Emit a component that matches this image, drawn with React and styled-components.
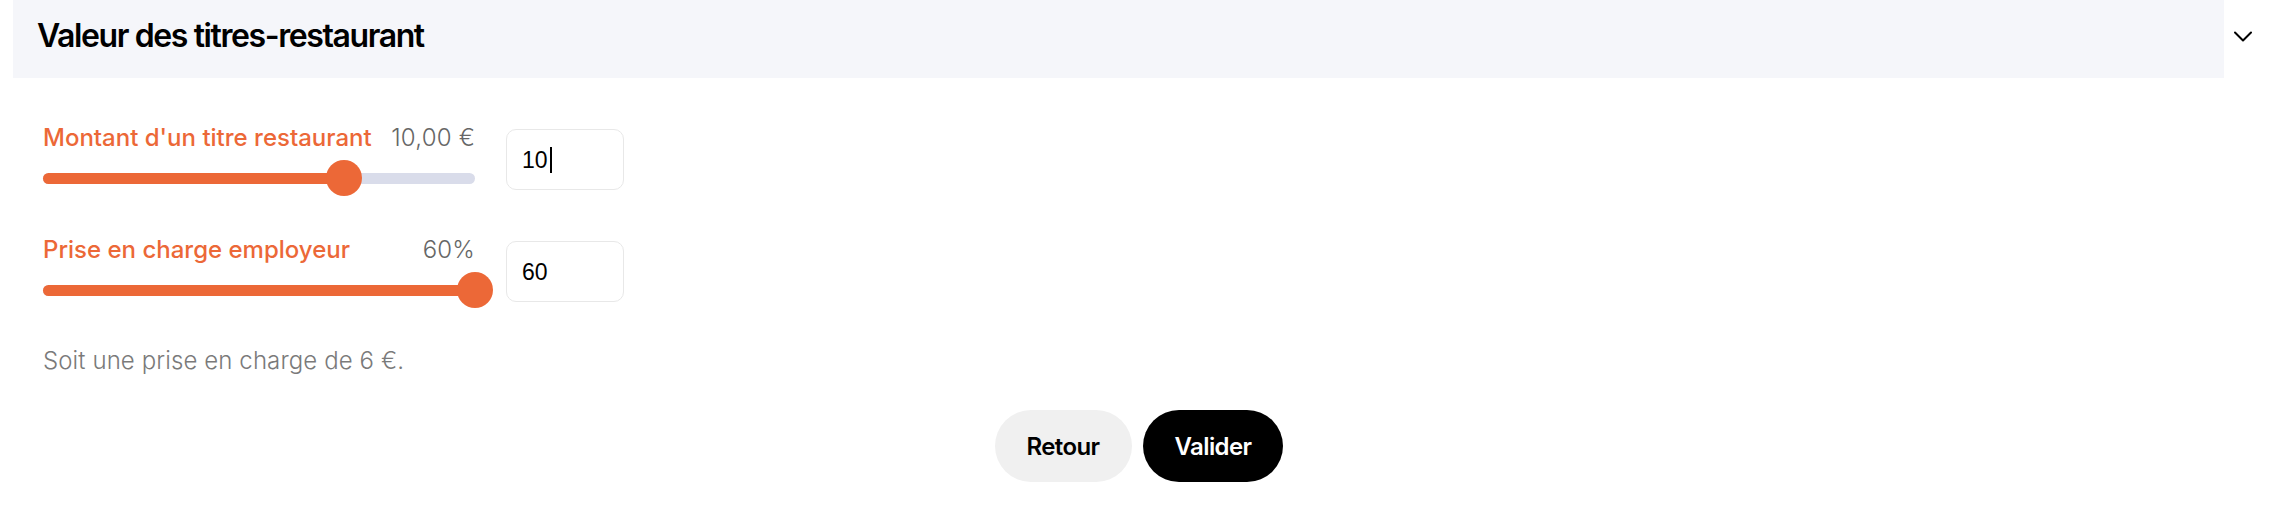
import React from "react";
import styled, { createGlobalStyle } from "styled-components";

const GlobalStyle = createGlobalStyle`
  html, body { margin: 0; padding: 0; background: #ffffff; }
  body { font-family: Inter, "Noto Sans", sans-serif; color: #000; }
  * { box-sizing: border-box; }
`;

const ORANGE = "#EC6837";

const Page = styled.div`
  width: 2284px;
  height: 506px;
  display: flex;
  flex-direction: column;
`;

const Header = styled.div`
  display: flex;
  align-items: stretch;
  height: 78px;
  padding-left: 13px;
`;

const TitleBar = styled.div`
  flex: 1;
  background: #F5F6FA;
  padding: 16px 0 0 24px;
`;

const Title = styled.h2`
  margin: 0;
  font-family: Inter, sans-serif;
  font-size: 32px;
  line-height: 40px;
  font-weight: 600;
  letter-spacing: -1.4px;
  color: #000;
`;

const ChevronCell = styled.div`
  width: 60px;
  display: flex;
  align-items: flex-start;
  padding: 31px 0 0 10px;
`;

const Body = styled.div`
  display: flex;
  flex-direction: column;
  gap: 38px;
  padding: 44px 0 0 43px;
`;

const Row = styled.div`
  display: flex;
  align-items: center;
  gap: 31px;
`;

const SliderColumn = styled.div`
  width: 432px;
  display: flex;
  flex-direction: column;
  gap: 6px;
`;

const LabelLine = styled.div`
  display: flex;
  justify-content: space-between;
  align-items: baseline;
  height: 32px;
`;

const Label = styled.span`
  font-size: 24px;
  line-height: 32px;
  font-weight: 500;
  color: ${ORANGE};
  letter-spacing: 0;
`;

const Value = styled.span`
  font-size: 24px;
  line-height: 32px;
  font-weight: 300;
  color: #666666;
  letter-spacing: 0.2px;
`;

const SliderArea = styled.div`
  position: relative;
  height: 36px;
  display: flex;
  align-items: center;
`;

const Track = styled.div`
  position: relative;
  width: 100%;
  height: 11px;
  border-radius: 6px;
  background: #D9DCEA;
`;

const Fill = styled.div`
  height: 100%;
  border-radius: 6px 0 0 6px;
  background: ${ORANGE};
`;

const Thumb = styled.div`
  position: absolute;
  top: 50%;
  width: 36px;
  height: 36px;
  border-radius: 50%;
  background: ${ORANGE};
  transform: translate(-50%, -50%);
`;

const Field = styled.div`
  width: 118px;
  height: 61px;
  border: 1px solid #E8E8E8;
  border-radius: 10px;
  display: flex;
  align-items: center;
  padding: 2px 0 0 15px;
  font-family: "Liberation Sans", Arial, sans-serif;
  font-size: 23px;
  color: #000;
`;

const Caret = styled.span`
  display: inline-block;
  width: 2px;
  height: 26px;
  margin-left: 2px;
  background: #000;
`;

const Note = styled.p`
  margin: 37px 0 0 43px;
  font-size: 24px;
  line-height: 32px;
  font-weight: 300;
  color: #7A7A7A;
  letter-spacing: 0.1px;
`;

const Actions = styled.div`
  display: flex;
  justify-content: center;
  gap: 11px;
  margin-top: 33px;
  padding-right: 6px;
`;

const Button = styled.button`
  height: 72px;
  padding: 0 32px;
  border: none;
  border-radius: 36px;
  background: ${(p) => (p.$primary ? "#000000" : "#F0F0F0")};
  color: ${(p) => (p.$primary ? "#ffffff" : "#000000")};
  font-family: Inter, sans-serif;
  font-size: 24px;
  font-weight: 600;
  letter-spacing: -0.6px;
  cursor: pointer;
`;

function Slider({ fraction }) {
  const pct = `${fraction * 100}%`;
  return (
    <SliderArea>
      <Track>
        <Fill style={{ width: pct }} />
        <Thumb style={{ left: pct }} />
      </Track>
    </SliderArea>
  );
}

function SliderRow({ label, display, fraction, value, caret }) {
  return (
    <Row>
      <SliderColumn>
        <LabelLine>
          <Label>{label}</Label>
          <Value>{display}</Value>
        </LabelLine>
        <Slider fraction={fraction} />
      </SliderColumn>
      <Field>
        <span>{value}</span>
        {caret && <Caret />}
      </Field>
    </Row>
  );
}

export default function App() {
  return (
    <>
      <GlobalStyle />
      <Page>
        <Header>
          <TitleBar>
            <Title>Valeur des titres-restaurant</Title>
          </TitleBar>
          <ChevronCell>
            <svg width="18" height="12" viewBox="0 0 18 12" fill="none">
              <polyline
                points="1,1.5 9,9.5 17,1.5"
                stroke="#000"
                strokeWidth="2"
                strokeLinecap="round"
                strokeLinejoin="round"
              />
            </svg>
          </ChevronCell>
        </Header>
        <Body>
          <SliderRow
            label="Montant d'un titre restaurant"
            display="10,00 €"
            fraction={0.697}
            value="10"
            caret
          />
          <SliderRow
            label="Prise en charge employeur"
            display="60%"
            fraction={1}
            value="60"
          />
        </Body>
        <Note>Soit une prise en charge de 6 €.</Note>
        <Actions>
          <Button>Retour</Button>
          <Button $primary>Valider</Button>
        </Actions>
      </Page>
    </>
  );
}
